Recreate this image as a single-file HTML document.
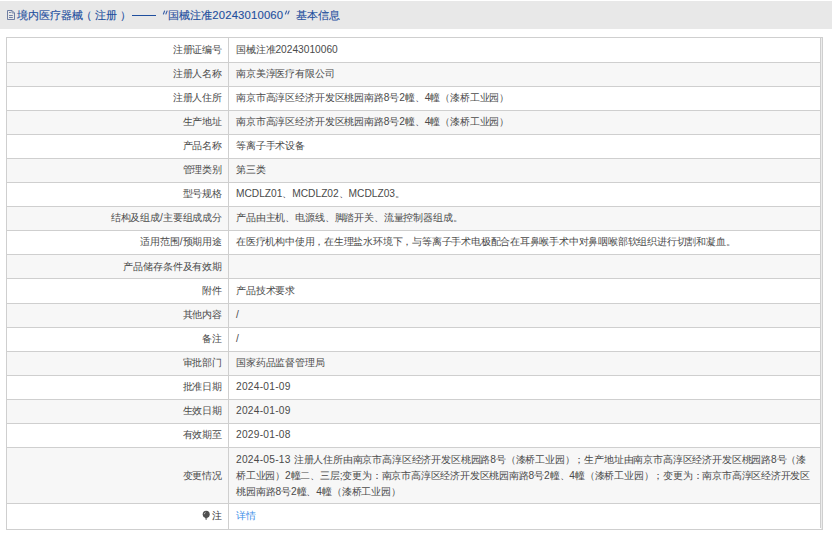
<!DOCTYPE html>
<html><head><meta charset="utf-8">
<style>
html,body{margin:0;padding:0;background:#fff;width:832px;height:533px;overflow:hidden;}
body{font-family:"Liberation Sans",sans-serif;position:relative;}
div,span{position:absolute;}
.hl{height:1px;background:#cfcfcf;}
.vl{width:1px;background:#cfcfcf;}
b{font-weight:normal;}
.tx{font-size:10.2px;line-height:16px;color:#4a4a4a;white-space:nowrap;}
.lb{right:610px;text-align:right;}
.vv{left:236px;}
.h{font-size:11.2px;line-height:16px;color:#1f4f9e;-webkit-text-stroke:0.12px #1f4f9e;white-space:nowrap;top:7px;}
</style></head><body>
<div style="left:0;top:1px;width:832px;height:28px;background:#e8e8e8"></div>
<svg style="position:absolute;left:6px;top:9px" width="10" height="12" viewBox="0 0 10 12"><path d="M1.5 1.5H6L8.5 4V10.5H1.5Z" fill="none" stroke="#62739c" stroke-width="0.9"/><path d="M6 1.5V4H8.5" fill="none" stroke="#62739c" stroke-width="0.7"/><path d="M3 3.5H4.8M3 6.5H6.8M3 8.5H6.8" stroke="#62739c" stroke-width="0.9"/></svg>
<span class="h" style="left:17px">境内医疗器械</span>
<span class="h" style="left:80.5px">（</span>
<span class="h" style="left:94.5px">注册</span>
<span class="h" style="left:119.5px">）</span>
<span class="h" style="left:132px;top:15px;width:24px;height:1px;background:#1f4f9e"></span>
<svg style="position:absolute;left:162px;top:10px" width="8" height="5" viewBox="0 0 8 5"><path d="M2.6 1L1.4 4M5.1 1L3.9 4" stroke="#3a5fa6" stroke-width="1.1" stroke-linecap="round"/></svg>
<span class="h" style="left:167.5px">国械注准</span>
<span class="h" style="left:212.3px;font-size:11.3px;letter-spacing:0.17px">20243010060</span>
<svg style="position:absolute;left:284px;top:10px" width="8" height="5" viewBox="0 0 8 5"><path d="M2.6 1L1.4 4M5.1 1L3.9 4" stroke="#3a5fa6" stroke-width="1.1" stroke-linecap="round"/></svg>
<span class="h" style="left:296px">基本信息</span>
<div style="left:7px;top:63px;width:813px;height:23px;background:#f7f7f7"></div>
<div style="left:7px;top:111px;width:813px;height:23px;background:#f7f7f7"></div>
<div style="left:7px;top:159px;width:813px;height:23px;background:#f7f7f7"></div>
<div style="left:7px;top:207px;width:813px;height:23px;background:#f7f7f7"></div>
<div style="left:7px;top:255px;width:813px;height:23px;background:#f7f7f7"></div>
<div style="left:7px;top:304px;width:813px;height:23px;background:#f7f7f7"></div>
<div style="left:7px;top:352px;width:813px;height:23px;background:#f7f7f7"></div>
<div style="left:7px;top:400px;width:813px;height:23px;background:#f7f7f7"></div>
<div style="left:7px;top:448px;width:813px;height:55px;background:#f7f7f7"></div>
<div class="hl" style="left:6px;top:37px;width:817px"></div>
<div class="hl" style="left:7px;top:62px;width:814px"></div>
<div class="hl" style="left:7px;top:86px;width:814px"></div>
<div class="hl" style="left:7px;top:110px;width:814px"></div>
<div class="hl" style="left:7px;top:134px;width:814px"></div>
<div class="hl" style="left:7px;top:158px;width:814px"></div>
<div class="hl" style="left:7px;top:182px;width:814px"></div>
<div class="hl" style="left:7px;top:206px;width:814px"></div>
<div class="hl" style="left:7px;top:230px;width:814px"></div>
<div class="hl" style="left:7px;top:254px;width:814px"></div>
<div class="hl" style="left:7px;top:278px;width:814px"></div>
<div class="hl" style="left:7px;top:303px;width:814px"></div>
<div class="hl" style="left:7px;top:327px;width:814px"></div>
<div class="hl" style="left:7px;top:351px;width:814px"></div>
<div class="hl" style="left:7px;top:375px;width:814px"></div>
<div class="hl" style="left:7px;top:399px;width:814px"></div>
<div class="hl" style="left:7px;top:423px;width:814px"></div>
<div class="hl" style="left:7px;top:447px;width:814px"></div>
<div class="hl" style="left:7px;top:503px;width:814px"></div>
<div class="hl" style="left:6px;top:529px;width:817px"></div>
<div class="vl" style="left:6px;top:37px;height:493px"></div>
<div class="vl" style="left:228px;top:38px;height:491px"></div>
<div class="vl" style="left:820px;top:38px;height:490px"></div>
<div class="vl" style="left:822px;top:37px;height:493px"></div>
<div style="left:821px;top:38px;width:1px;height:491px;background:#ececec"></div>
<span class="tx lb" style="top:42px"><b style="letter-spacing:-0.15px">注册证编号</b></span>
<span class="tx vv" style="top:42px"><b style="letter-spacing:-0.15px">国械注准</b>20243010060</span>
<span class="tx lb" style="top:66px"><b style="letter-spacing:-0.15px">注册人名称</b></span>
<span class="tx vv" style="top:66px"><b style="letter-spacing:-0.15px">南京美淳医疗有限公司</b></span>
<span class="tx lb" style="top:90px"><b style="letter-spacing:-0.15px">注册人住所</b></span>
<span class="tx vv" style="top:90px"><b style="letter-spacing:-0.15px">南京市高淳区经济开发区桃园南路</b>8<b style="letter-spacing:-0.15px">号</b>2<b style="letter-spacing:-0.15px">幢、</b>4<b style="letter-spacing:-0.15px">幢（漆桥工业园）</b></span>
<span class="tx lb" style="top:114px"><b style="letter-spacing:-0.15px">生产地址</b></span>
<span class="tx vv" style="top:114px"><b style="letter-spacing:-0.15px">南京市高淳区经济开发区桃园南路</b>8<b style="letter-spacing:-0.15px">号</b>2<b style="letter-spacing:-0.15px">幢、</b>4<b style="letter-spacing:-0.15px">幢（漆桥工业园）</b></span>
<span class="tx lb" style="top:138px"><b style="letter-spacing:-0.15px">产品名称</b></span>
<span class="tx vv" style="top:138px"><b style="letter-spacing:-0.15px">等离子手术设备</b></span>
<span class="tx lb" style="top:162px"><b style="letter-spacing:-0.15px">管理类别</b></span>
<span class="tx vv" style="top:162px"><b style="letter-spacing:-0.15px">第三类</b></span>
<span class="tx lb" style="top:186px"><b style="letter-spacing:-0.15px">型号规格</b></span>
<span class="tx vv" style="top:186px">MCDLZ01<b style="letter-spacing:-0.15px">、</b>MCDLZ02<b style="letter-spacing:-0.15px">、</b>MCDLZ03<b style="letter-spacing:-0.15px">。</b></span>
<span class="tx lb" style="top:210.4px"><b style="letter-spacing:-0.15px">结构及组成</b>/<b style="letter-spacing:-0.15px">主要组成成分</b></span>
<span class="tx vv" style="top:210.4px"><b style="letter-spacing:-0.15px">产品由主机、电源线、脚踏开关、流量控制器组成。</b></span>
<span class="tx lb" style="top:234.4px"><b style="letter-spacing:-0.15px">适用范围</b>/<b style="letter-spacing:-0.15px">预期用途</b></span>
<span class="tx vv" style="top:234.4px"><b style="letter-spacing:-0.21px">在医疗机构中使用，在生理盐水环境下，与等离子手术电极配合在耳鼻喉手术中对鼻咽喉部软组织进行切割和凝血。</b></span>
<span class="tx lb" style="top:258.6px"><b style="letter-spacing:-0.15px">产品储存条件及有效期</b></span>
<span class="tx lb" style="top:282.6px"><b style="letter-spacing:-0.15px">附件</b></span>
<span class="tx vv" style="top:282.6px"><b style="letter-spacing:-0.15px">产品技术要求</b></span>
<span class="tx lb" style="top:307px"><b style="letter-spacing:-0.15px">其他内容</b></span>
<span class="tx vv" style="top:307px">/</span>
<span class="tx lb" style="top:331px"><b style="letter-spacing:-0.15px">备注</b></span>
<span class="tx vv" style="top:331px">/</span>
<span class="tx lb" style="top:355px"><b style="letter-spacing:-0.15px">审批部门</b></span>
<span class="tx vv" style="top:355px"><b style="letter-spacing:-0.15px">国家药品监督管理局</b></span>
<span class="tx lb" style="top:379px"><b style="letter-spacing:-0.15px">批准日期</b></span>
<span class="tx vv" style="top:379px"><b style="letter-spacing:0.25px">2024-01-09</b></span>
<span class="tx lb" style="top:403px"><b style="letter-spacing:-0.15px">生效日期</b></span>
<span class="tx vv" style="top:403px"><b style="letter-spacing:0.25px">2024-01-09</b></span>
<span class="tx lb" style="top:427px"><b style="letter-spacing:-0.15px">有效期至</b></span>
<span class="tx vv" style="top:427px"><b style="letter-spacing:0.25px">2029-01-08</b></span>
<span class="tx lb" style="top:468px"><b style="letter-spacing:-0.15px">变更情况</b></span>
<span class="tx vv" style="top:452px"><b style="letter-spacing:0.25px">2024-05-13 </b><b style="letter-spacing:-0.175px">注册人住所由南京市高淳区经济开发区桃园路</b>8<b style="letter-spacing:-0.175px">号（漆桥工业园）；生产地址由南京市高淳区经济开发区桃园路</b>8<b style="letter-spacing:-0.175px">号（漆</b></span>
<span class="tx vv" style="top:468px"><b style="letter-spacing:-0.205px">桥工业园）</b>2<b style="letter-spacing:-0.205px">幢二、三层</b>;<b style="letter-spacing:-0.205px">变更为：南京市高淳区经济开发区桃园南路</b>8<b style="letter-spacing:-0.205px">号</b>2<b style="letter-spacing:-0.205px">幢、</b>4<b style="letter-spacing:-0.205px">幢（漆桥工业园）；变更为：南京市高淳区经济开发区</b></span>
<span class="tx vv" style="top:484px"><b style="letter-spacing:-0.15px">桃园南路</b>8<b style="letter-spacing:-0.15px">号</b>2<b style="letter-spacing:-0.15px">幢、</b>4<b style="letter-spacing:-0.15px">幢（漆桥工业园）</b></span>
<span class="tx lb" style="top:508px;color:#333">注</span>
<svg style="position:absolute;left:202px;top:510px" width="9" height="11" viewBox="0 0 9 11"><circle cx="4.2" cy="4.3" r="3.5" fill="#505050"/><path d="M2.8 7L5.6 7L5.1 8.4H3.3Z" fill="#505050"/><rect x="3.4" y="8.4" width="1.6" height="1.3" fill="#7a7a7a"/><path d="M2.4 4.2Q2.4 2.8 3.6 2.3" stroke="#cfcfcf" stroke-width="0.8" fill="none"/></svg>
<span class="tx vv" style="top:508px;color:#3d8ee8">详情</span>
</body></html>
